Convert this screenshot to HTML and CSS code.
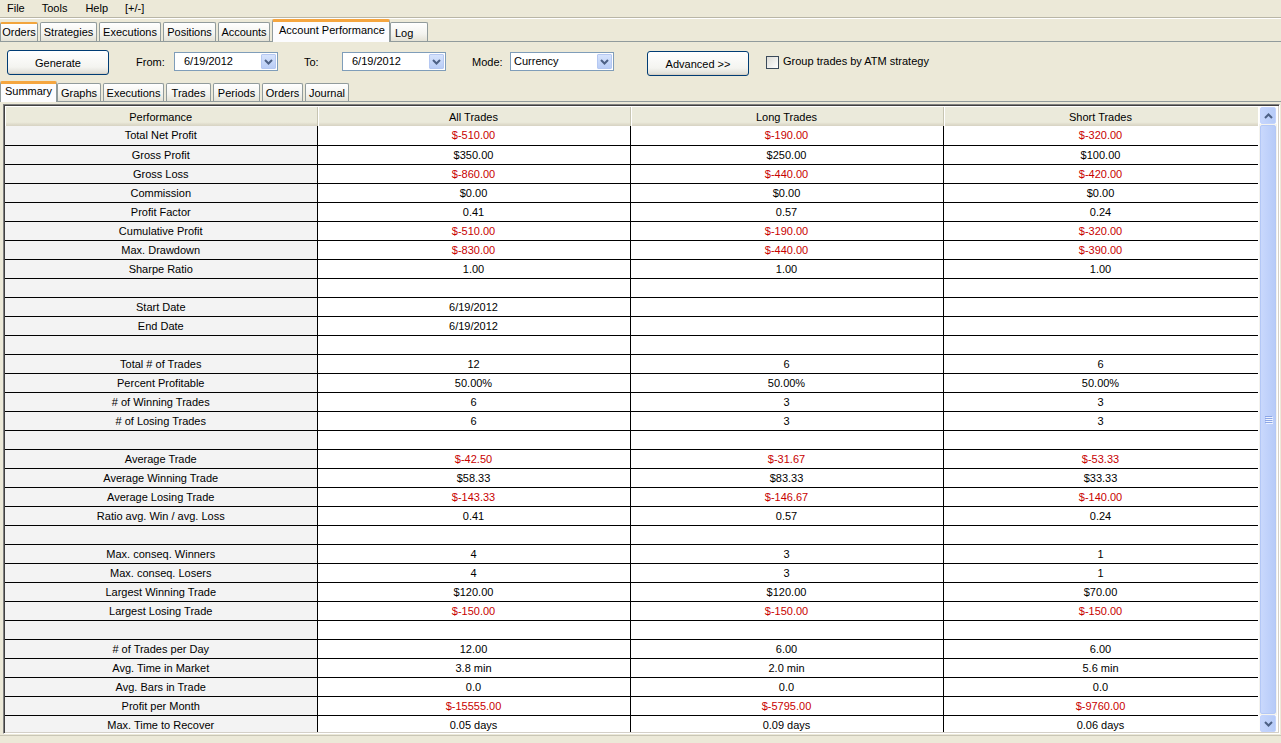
FILE: index.html
```html
<!DOCTYPE html>
<html>
<head>
<meta charset="utf-8">
<link rel="stylesheet" href="styles.css">
</head>
<body>
<div class="app">
  <div class="menubar">
    <span class="mi mi-file">File</span>
    <span class="mi mi-tools">Tools</span>
    <span class="mi mi-help">Help</span>
    <span class="mi mi-pm">[+/-]</span>
  </div>
  <div class="tabstrip">
    <div class="tab tab-hot w38">Orders</div>
    <div class="tab w57">Strategies</div>
    <div class="tab w62">Executions</div>
    <div class="tab w53">Positions</div>
    <div class="tab w52">Accounts</div>
    <div class="tab tab-active w118">Account Performance</div>
    <div class="tab w38 tab-log">Log</div>
  </div>
  <div class="toolbar">
    <button class="btn btn-generate">Generate</button>
    <span class="lbl lbl-from">From:</span>
    <div class="combo combo-date"><span class="combo-text">6/19/2012</span><span class="combo-btn"><svg width="9" height="6" viewBox="0 0 9 6"><polyline points="1,1 4.5,4.5 8,1" fill="none" stroke="#4d6185" stroke-width="2"/></svg></span></div>
    <span class="lbl lbl-to">To:</span>
    <div class="combo combo-date"><span class="combo-text">6/19/2012</span><span class="combo-btn"><svg width="9" height="6" viewBox="0 0 9 6"><polyline points="1,1 4.5,4.5 8,1" fill="none" stroke="#4d6185" stroke-width="2"/></svg></span></div>
    <span class="lbl lbl-mode">Mode:</span>
    <div class="combo combo-mode"><span class="combo-text left">Currency</span><span class="combo-btn"><svg width="9" height="6" viewBox="0 0 9 6"><polyline points="1,1 4.5,4.5 8,1" fill="none" stroke="#4d6185" stroke-width="2"/></svg></span></div>
    <button class="btn btn-adv">Advanced &gt;&gt;</button>
    <span class="check"></span>
    <span class="lbl lbl-check">Group trades by ATM strategy</span>
  </div>
  <div class="subtabs">
    <div class="stab stab-active s57">Summary</div>
    <div class="stab s44">Graphs</div>
    <div class="stab s61">Executions</div>
    <div class="stab s45">Trades</div>
    <div class="stab s47">Periods</div>
    <div class="stab s41">Orders</div>
    <div class="stab s44">Journal</div>
  </div>
  <div class="panel">
    <div class="grid-wrap">
      <table class="grid">
        <colgroup><col class="c1"><col class="c2"><col class="c3"><col class="c4"></colgroup>
        <thead>
          <tr><th>Performance</th><th>All Trades</th><th>Long Trades</th><th>Short Trades</th></tr>
        </thead>
        <tbody id="rows"></tbody>
      </table>
    </div>
    <div class="vscroll">
      <div class="sb-btn"><svg width="9" height="6" viewBox="0 0 9 6"><polyline points="1,5 4.5,1.5 8,5" fill="none" stroke="#4d6185" stroke-width="2"/></svg></div>
      <div class="sb-track">
        <div class="sb-thumb"><span class="grip"></span><span class="grip"></span><span class="grip"></span><span class="grip"></span></div>
      </div>
      <div class="sb-btn"><svg width="9" height="6" viewBox="0 0 9 6"><polyline points="1,1 4.5,4.5 8,1" fill="none" stroke="#4d6185" stroke-width="2"/></svg></div>
    </div>
  </div>
  <div class="statusbar"></div>
</div>
<script src="app.js"></script>
</body>
</html>
```

FILE: app.js
```js
var data = [
  ["Total Net Profit", "$-510.00", "$-190.00", "$-320.00"],
  ["Gross Profit", "$350.00", "$250.00", "$100.00"],
  ["Gross Loss", "$-860.00", "$-440.00", "$-420.00"],
  ["Commission", "$0.00", "$0.00", "$0.00"],
  ["Profit Factor", "0.41", "0.57", "0.24"],
  ["Cumulative Profit", "$-510.00", "$-190.00", "$-320.00"],
  ["Max. Drawdown", "$-830.00", "$-440.00", "$-390.00"],
  ["Sharpe Ratio", "1.00", "1.00", "1.00"],
  ["", "", "", ""],
  ["Start Date", "6/19/2012", "", ""],
  ["End Date", "6/19/2012", "", ""],
  ["", "", "", ""],
  ["Total # of Trades", "12", "6", "6"],
  ["Percent Profitable", "50.00%", "50.00%", "50.00%"],
  ["# of Winning Trades", "6", "3", "3"],
  ["# of Losing Trades", "6", "3", "3"],
  ["", "", "", ""],
  ["Average Trade", "$-42.50", "$-31.67", "$-53.33"],
  ["Average Winning Trade", "$58.33", "$83.33", "$33.33"],
  ["Average Losing Trade", "$-143.33", "$-146.67", "$-140.00"],
  ["Ratio avg. Win / avg. Loss", "0.41", "0.57", "0.24"],
  ["", "", "", ""],
  ["Max. conseq. Winners", "4", "3", "1"],
  ["Max. conseq. Losers", "4", "3", "1"],
  ["Largest Winning Trade", "$120.00", "$120.00", "$70.00"],
  ["Largest Losing Trade", "$-150.00", "$-150.00", "$-150.00"],
  ["", "", "", ""],
  ["# of Trades per Day", "12.00", "6.00", "6.00"],
  ["Avg. Time in Market", "3.8 min", "2.0 min", "5.6 min"],
  ["Avg. Bars in Trade", "0.0", "0.0", "0.0"],
  ["Profit per Month", "$-15555.00", "$-5795.00", "$-9760.00"],
  ["Max. Time to Recover", "0.05 days", "0.09 days", "0.06 days"]
];
var tb = document.getElementById("rows");
data.forEach(function (r) {
  var tr = document.createElement("tr");
  r.forEach(function (v, i) {
    var td = document.createElement("td");
    td.textContent = v;
    if (i === 0) td.className = "label";
    else if (v.indexOf("$-") === 0) td.className = "neg";
    tr.appendChild(td);
  });
  tb.appendChild(tr);
});
```

FILE: styles.css
```css
html, body {
  margin: 0;
  padding: 0;
  background: #ece9d8;
  font-family: "Liberation Sans", Arial, sans-serif;
  font-size: 11px;
  color: #000;
}
.app {
  width: 1281px;
  height: 743px;
  overflow: hidden;
  display: flex;
  flex-direction: column;
}
/* menu */
.menubar {
  height: 17px;
  border-bottom: 1px solid #b9b6a6;
  display: flex;
  align-items: center;
  line-height: 13px;
}
.mi { display: inline-block; }
.mi-file { margin-left: 7px; }
.mi-tools { margin-left: 17px; }
.mi-help { margin-left: 18px; }
.mi-pm { margin-left: 17px; }

/* top tabs */
.tabstrip {
  height: 22px;
  display: flex;
  align-items: flex-end;
  border-bottom: 1px solid #919b9c;
  border-top: 1px solid #fff;
}
.tab {
  height: 19px;
  box-sizing: border-box;
  border: 1px solid #919b9c;
  border-bottom: none;
  border-radius: 2px 2px 0 0;
  background: linear-gradient(#ffffff, #f3f3ef 60%, #e4e2d6);
  margin-right: 2px;
  text-align: center;
  line-height: 18px;
  white-space: nowrap;
  font-size: 11px;
  overflow: hidden;
}
.tab-hot { border-top: 2px solid #f2a53c; line-height: 16px; }
.tab-active {
  height: 23px;
  margin-bottom: -1px;
  background: #fcfcfe;
  border-top: 3px solid #f5a640;
  line-height: 16px;
  margin-right: 0;
  text-align: left;
  padding-left: 6px;
  position: relative;
  z-index: 1;
}
.tab-log { text-align: left; padding-left: 4px; line-height: 20px; }
.w38 { width: 38px; }
.w57 { width: 57px; }
.w62 { width: 62px; }
.w53 { width: 53px; }
.w52 { width: 52px; }
.w118 { width: 118px; }

/* toolbar */
.toolbar {
  height: 39px;
  display: flex;
  align-items: flex-start;
  padding-left: 7px;
  box-sizing: border-box;
  padding-top: 8px;
}
.btn {
  font-family: inherit;
  font-size: 11px;
  color: #000;
  border: 1px solid #003c74;
  border-radius: 3px;
  background: linear-gradient(#ffffff, #f4f4f0 70%, #dcdbd3);
  padding: 0;
  box-shadow: inset 0 -1px 0 #d6d0c5;
}
.btn-generate { width: 102px; height: 25px; }
.btn-adv { width: 102px; height: 25px; margin-left: 33px; margin-top: 1px; }
.lbl { white-space: nowrap; line-height: 13px; margin-top: 6px; }
.lbl-from { margin-left: 27px; width: 38px; }
.lbl-to { margin-left: 26px; width: 38px; }
.lbl-mode { margin-left: 26px; width: 38px; }
.combo {
  height: 19px;
  box-sizing: border-box;
  border: 1px solid #7f9db9;
  background: #fff;
  display: flex;
  align-items: stretch;
  margin-top: 2px;
}
.combo-date { width: 104px; }
.combo-mode { width: 104px; }
.combo-text {
  flex: 1;
  line-height: 17px;
  padding-left: 9px;
}
.combo-text.left { padding-left: 3px; }
.combo-btn {
  width: 15px;
  margin: 1px;
  background: linear-gradient(#d6e3fc, #b9cdf6);
  border: 1px solid #b5c8f2;
  border-radius: 1px;
  display: flex;
  align-items: center;
  justify-content: center;
  box-sizing: border-box;
}
.check {
  width: 13px;
  height: 13px;
  box-sizing: border-box;
  border: 1px solid #3b4a5a;
  background: linear-gradient(135deg, #dcdcd6, #fff);
  margin-left: 17px;
  margin-top: 6px;
}
.lbl-check { margin-left: 4px; margin-top: 5px; }

/* sub tabs */
.subtabs {
  height: 21px;
  display: flex;
  align-items: flex-end;
  border-bottom: 1px solid #919b9c;
  box-sizing: border-box;
}
.stab {
  height: 18px;
  box-sizing: border-box;
  border: 1px solid #919b9c;
  border-bottom: none;
  border-radius: 2px 2px 0 0;
  background: linear-gradient(#ffffff, #f3f3ef 60%, #e4e2d6);
  margin-right: 2px;
  text-align: center;
  line-height: 18px;
  white-space: nowrap;
  font-size: 11px;
}
.stab-active {
  height: 21px;
  margin-bottom: -1px;
  background: #fcfcfe;
  border-top: 3px solid #f5a640;
  line-height: 14px;
  margin-right: 0;
  position: relative;
  z-index: 1;
}
.s57 { width: 57px; }
.s44 { width: 44px; }
.s61 { width: 61px; }
.s45 { width: 45px; }
.s47 { width: 47px; }
.s41 { width: 41px; }

/* panel */
.panel {
  margin: 2px 1px 0 3px;
  height: 630px;
  box-sizing: border-box;
  border: 1px solid #808080;
  border-right-color: #fff;
  border-bottom-color: #fff;
  box-shadow: inset 1px 1px 0 #404040, inset -1px -1px 0 #d4d0c8;
  padding: 2px 1px 1px 1px;
  display: flex;
  background: #fff;
}
.grid-wrap {
  width: 1253px;
  overflow: hidden;
  background: #fff;
}
.grid {
  border-collapse: collapse;
  table-layout: fixed;
  width: 1253px;
}
.c1 { width: 312px; }
.c2 { width: 313px; }
.c3 { width: 313px; }
.c4 { width: 315px; }
.grid th {
  height: 19px;
  box-sizing: border-box;
  padding: 0;
  font-weight: normal;
  background: linear-gradient(#ebeadb 80%, #e2dfcf 88%, #d6d2c2);
  border-right: 1px solid #c7c5b2;
  box-shadow: inset 1px 0 0 #fff;
  line-height: 18px;
  font-size: 11px;
}
.grid td {
  height: 19px;
  box-sizing: border-box;
  padding: 0;
  text-align: center;
  border-right: 1px solid #000;
  border-bottom: 1px solid #000;
  line-height: 18px;
  white-space: nowrap;
  overflow: hidden;
}
.grid td.label { background: #f3f3f3; }
.grid td.neg { color: #c80000; }

/* scrollbar */
.vscroll {
  width: 18px;
  display: flex;
  flex-direction: column;
  background: #fdfdfb;
  margin-left: 1px;
}
.sb-btn {
  height: 17px;
  box-sizing: border-box;
  border: 1px solid #c3d3fd;
  border-radius: 2px;
  background: linear-gradient(90deg, #c6d6fc, #b6cbf8);
  display: flex;
  align-items: center;
  justify-content: center;
  margin: 0 1px;
}
.sb-track {
  flex: 1;
  display: flex;
  padding: 1px 1px;
  background: #f4f3ee;
}
.sb-thumb {
  flex: 1;
  border: 1px solid #b4c8f6;
  border-radius: 2px;
  background: linear-gradient(90deg, #c9d8fc, #bed0fa 60%, #b7cbf8);
  display: flex;
  flex-direction: column;
  align-items: center;
  justify-content: center;
  gap: 1px;
}
.grip {
  width: 7px;
  height: 1px;
  background: #8ca6e6;
  box-shadow: 1px 1px 0 #eef3fe;
}

.statusbar {
  flex: 1;
  border-top: 1px solid #c9c6b6;
  margin-top: 1px;
  background: #ece9d8;
}
```
